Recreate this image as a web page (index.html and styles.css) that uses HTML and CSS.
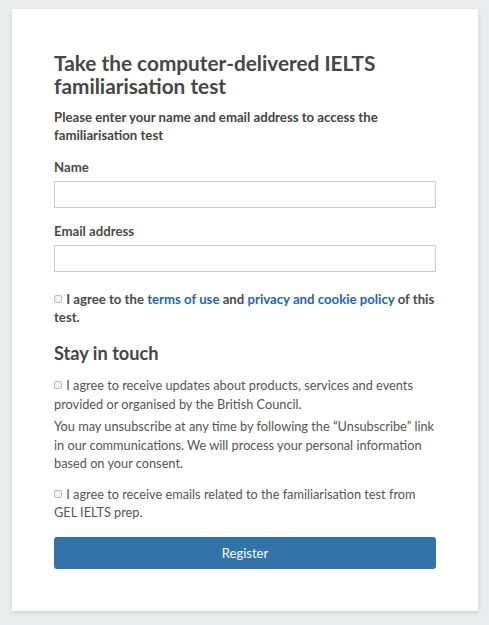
FILE: index.html
```html
<!DOCTYPE html>
<html lang="en">
<head>
<meta charset="utf-8">
<title>IELTS familiarisation test</title>
<link rel="stylesheet" href="styles.css">
</head>
<body>
<main class="card">
  <h1 class="title">Take the computer-delivered IELTS familiarisation test</h1>
  <p class="intro">Please enter your name and email address to access the familiarisation test</p>
  <form class="form">
    <div class="field">
      <label class="label" for="name">Name</label>
      <input class="input" id="name" type="text">
    </div>
    <div class="field">
      <label class="label" for="email">Email address</label>
      <input class="input" id="email" type="email">
    </div>
    <p class="agree"><span class="box"></span> I agree to the <a class="link" href="#">terms of use</a> and <a class="link" href="#">privacy and cookie policy</a> of this test.</p>
    <h2 class="subtitle">Stay in touch</h2>
    <p class="text first"><span class="box"></span> I agree to receive updates about products, services and events provided or organised by the British Council.</p>
    <p class="text">You may unsubscribe at any time by following the “Unsubscribe” link in our communications. We will process your personal information based on your consent.</p>
    <p class="text gap"><span class="box"></span> I agree to receive emails related to the familiarisation test from GEL IELTS prep.</p>
    <button class="btn" type="button">Register</button>
  </form>
</main>
</body>
</html>
```
FILE: styles.css
```css
html, body {
  margin: 0;
  padding: 0;
}
body {
  background: #ebecee;
  font-family: Lato, "Open Sans", sans-serif;
  color: #4a4a4a;
  padding: 9px 11px 13px 12px;
}
.card {
  background: #fff;
  box-shadow: 0 2px 5px rgba(0,0,0,0.12);
  padding: 42px 42px 42px 42px;
  width: 382px;
}
.title {
  margin: 0;
  font-size: 20.8px;
  line-height: 23px;
  font-weight: 700;
  color: #464646;
}
.intro {
  margin: 11px 0 0;
  font-size: 13.2px;
  line-height: 18px;
  font-weight: 700;
  color: #444;
}
.form {
  margin: 0;
}
.field {
  margin-top: 14px;
}
.label {
  display: block;
  font-size: 13.2px;
  line-height: 18px;
  font-weight: 700;
  color: #4a4a4a;
  margin-bottom: 5px;
}
.input {
  display: block;
  box-sizing: border-box;
  width: 100%;
  height: 27px;
  border: 1px solid #ccc;
  margin: 0;
  padding: 0 8px;
  background: #fff;
}
.agree {
  margin: 18px 0 0;
  font-size: 13.2px;
  line-height: 18px;
  font-weight: 700;
  color: #4a4a4a;
}
.link {
  color: #1c66bb;
  text-decoration: none;
}
.box {
  display: inline-block;
  width: 6px;
  height: 6px;
  border: 1px solid #bbb;
  border-radius: 2px;
  background: #f2f2f2;
  vertical-align: 1px;
  margin-right: 1px;
}
.subtitle {
  margin: 15px 0 0;
  font-size: 18.2px;
  line-height: 24px;
  font-weight: 700;
  color: #464646;
}
.text {
  margin: 4px 0 0;
  font-size: 12.75px;
  line-height: 18.5px;
  font-weight: 400;
  color: #555;
}
.text.first {
  margin-top: 11px;
}
.text.gap {
  margin-top: 12px;
}
.btn {
  display: block;
  width: 100%;
  height: 32px;
  margin-top: 15px;
  border: 0;
  border-radius: 3px;
  background: #3273aa;
  color: #fff;
  font-family: inherit;
  font-size: 13px;
}
```
